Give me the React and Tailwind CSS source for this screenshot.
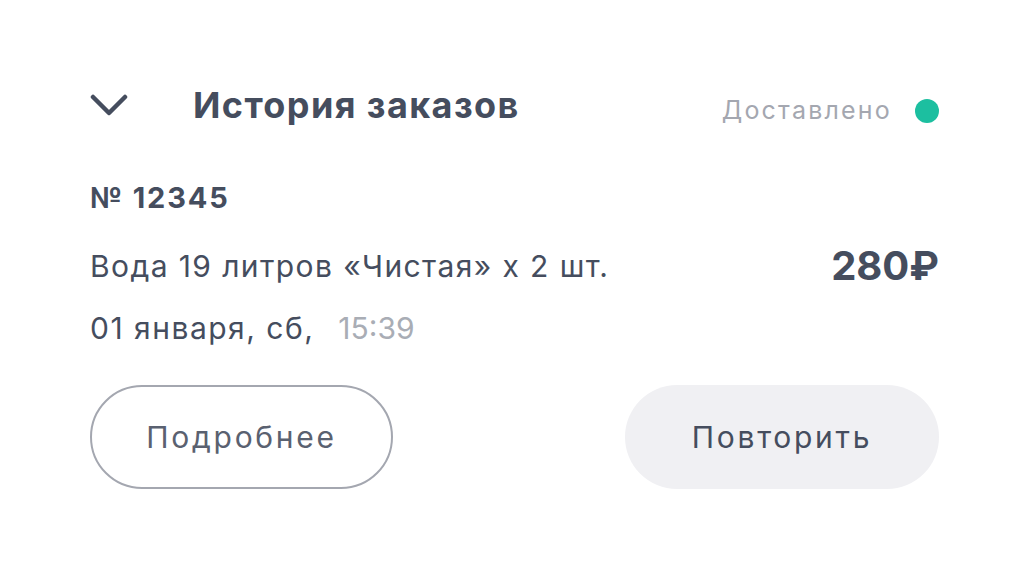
export default function App() {
  return (
    <div
      className="w-[1029px] h-[567px] bg-white px-[90px] pt-[75px] text-[#454d5e]"
      style={{ fontFamily: "Inter, 'Noto Sans', sans-serif" }}
    >
      {/* header */}
      <div className="flex h-[60px] items-center justify-between">
        <div className="flex items-center">
          <svg width="38" height="22" viewBox="0 0 38 22" fill="none" className="mr-[65px]">
            <polyline
              points="3,3 19,19 35,3"
              stroke="#454d5e"
              strokeWidth="4.5"
              strokeLinecap="round"
              strokeLinejoin="round"
            />
          </svg>
          <h1 className="text-[36px] font-bold tracking-[1.4px]">История заказов</h1>
        </div>
        <div className="flex items-center gap-[23px] pt-[12px]">
          <span className="text-[25px] tracking-[2.2px] text-[#a4a7b0]">Доставлено</span>
          <span className="w-[24px] h-[24px] rounded-full bg-[#1cbfa0]" />
        </div>
      </div>

      {/* order */}
      <div className="flex h-[40px] items-center mt-[43px]">
        <span className="text-[29px] font-bold tracking-[1.9px]">№ 12345</span>
      </div>
      <div className="flex h-[40px] items-center justify-between mt-[28px]">
        <span className="text-[30px] tracking-[1.4px]">Вода 19 литров «Чистая» x 2 шт.</span>
        <span className="text-[40px] font-bold">280₽</span>
      </div>
      <div className="flex h-[40px] items-center mt-[22px]">
        <span className="text-[30px] tracking-[1.5px]">01 января, сб,</span>
        <span className="text-[30px] text-[#a9adb5] ml-[24px]">15:39</span>
      </div>

      {/* actions */}
      <div className="flex justify-between mt-[37px]">
        <button className="w-[303px] h-[104px] rounded-full border-[2.5px] border-[#a4a7b0] text-[30px] tracking-[2.7px] text-[#5a6170]">
          Подробнее
        </button>
        <button className="w-[314px] h-[104px] rounded-full bg-[#f0f0f3] text-[30px] tracking-[2.7px] text-[#454d5e]">
          Повторить
        </button>
      </div>
    </div>
  );
}
